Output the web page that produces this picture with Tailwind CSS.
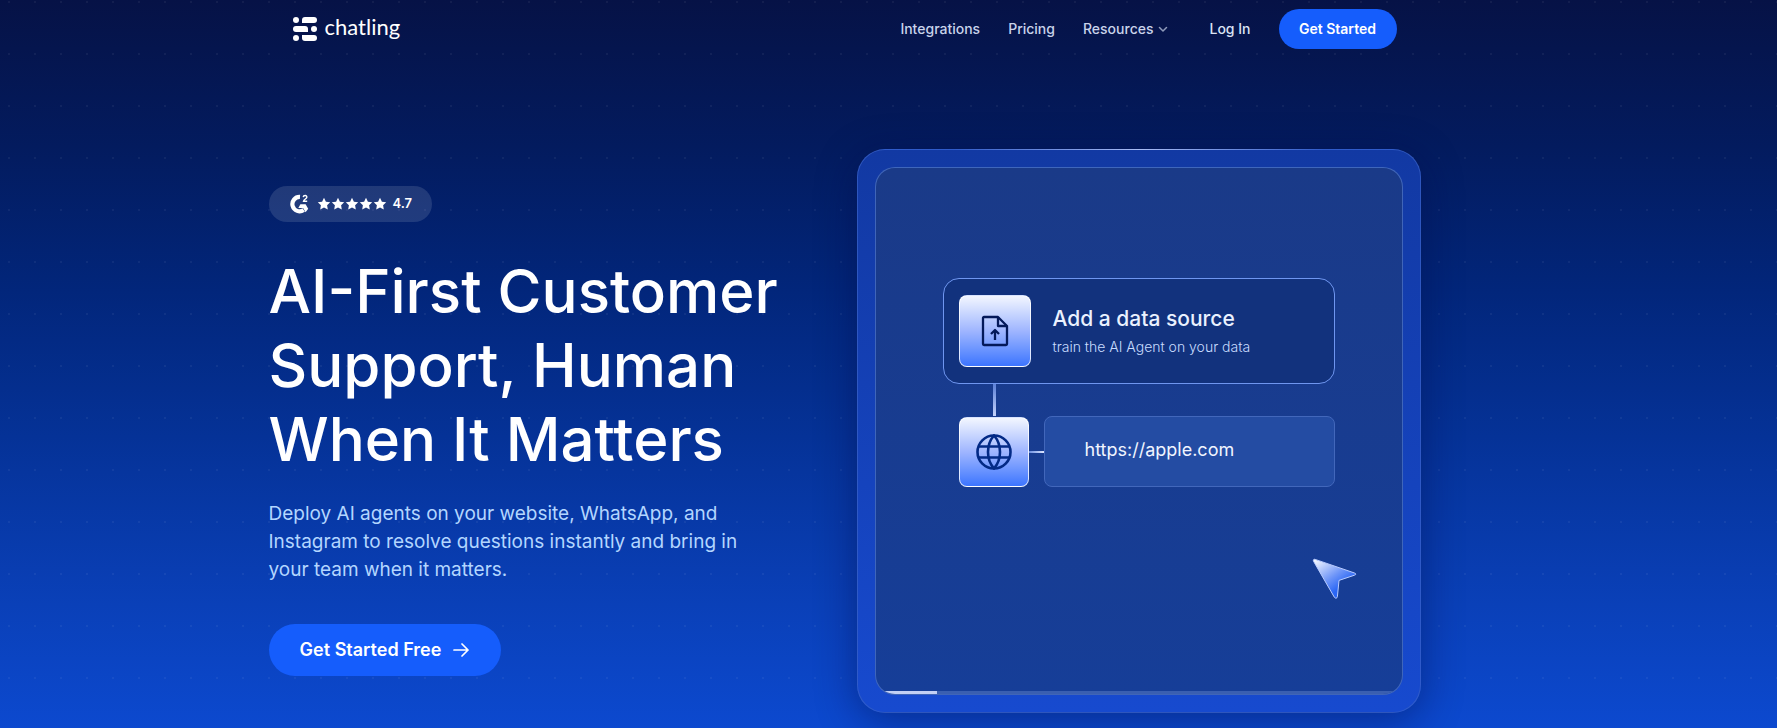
<!DOCTYPE html>
<html lang="en">
<head>
    <meta charset="UTF-8">
    <meta name="viewport" content="width=device-width, initial-scale=1.0">
    <title>Chatling - AI-First Customer Support</title>
    <script src="https://cdn.jsdelivr.net/npm/@tailwindcss/browser@4"></script>
</head>
<body class="min-h-screen overflow-x-hidden bg-[#0b48cc] bg-[linear-gradient(180deg,#061246_0%,#031b5e_20%,#02267b_40%,#053297_60%,#0a40b8_83%,#0c49cf_100%)] font-['Inter',sans-serif] text-white">
    <div class="min-h-screen bg-[radial-gradient(circle_at_center,rgb(255_255_255/0.05)_1px,transparent_1px)] bg-size-[26px_52px] bg-position-[-4px_-24px] lg:pr-22">

        <!-- Header -->
        <header class="mx-auto flex h-[58px] max-w-6xl items-center justify-between px-6">
            <a href="#" class="flex items-center gap-2">
                <svg class="size-6" viewBox="0 0 24 24" fill="currentColor" aria-hidden="true">
                    <circle cx="3" cy="3" r="3" />
                    <path d="M12 0h9a3 3 0 0 1 0 6H9V3a3 3 0 0 1 3-3z" />
                    <path d="M3 9h9a3 3 0 0 1 3 3v3H3a3 3 0 0 1 0-6z" />
                    <circle cx="21" cy="12" r="3" />
                    <circle cx="3" cy="21" r="3" />
                    <path d="M12 18h9a3 3 0 0 1 0 6h-9a3 3 0 0 1-3-3v-3z" />
                </svg>
                <span class="mb-1 font-['Lato',sans-serif] text-[22px] leading-6">chatling</span>
            </a>

            <nav class="flex items-center text-sm font-medium text-[#c9d3ea]">
                <a href="#" class="hover:text-white">Integrations</a>
                <a href="#" class="ml-7 hover:text-white">Pricing</a>
                <button type="button" class="ml-7 flex items-center gap-1 hover:text-white">
                    Resources
                    <svg class="size-3 opacity-70" viewBox="0 0 12 12" fill="none" stroke="currentColor" stroke-width="1.5" stroke-linecap="round" stroke-linejoin="round" aria-hidden="true">
                        <path d="m2.500 4.500 3.500 3.500 3.500-3.500" />
                    </svg>
                </button>
                <a href="#" class="ml-10 text-[#dbe3f5] hover:text-white">Log In</a>
                <a href="#" class="ml-7 flex h-10 w-[118px] items-center justify-center rounded-full bg-[#155dfc] font-semibold text-white hover:bg-blue-500">Get Started</a>
            </nav>
        </header>

        <!-- Hero -->
        <main class="mx-auto grid max-w-6xl items-start pt-[91px] pb-[15px] lg:grid-cols-[1fr_564px]">
            <section class="pt-[37px]">
                <div class="inline-flex h-9 items-center rounded-full bg-white/12 px-5">
                    <svg class="size-5" viewBox="0 0 20 20" aria-label="G2">
                        <path d="M11 2.900A7.200 7.200 0 1 0 14.700 16" fill="none" stroke="currentColor" stroke-width="4.200" />
                        <path d="M11.400 10.300h5.200l2.600 4.500-2.600 3.400-2.500-4.300H9.300z" fill="currentColor" />
                        <path d="M14.200 3.200c.3-2.300 3.900-2.100 3.600.1-.2 1.500-2.900 2-3.300 4h3.700" fill="none" stroke="currentColor" stroke-width="1.400" />
                    </svg>
                    <svg class="ml-2 h-3.5 w-[70px]" viewBox="0 0 70 14" fill="currentColor" aria-label="5 stars">
                        <defs>
                            <path id="star" d="M7 .8l1.900 3.900 4.300.6-3.100 3 .7 4.300L7 10.600l-3.800 2 .7-4.300-3.100-3 4.300-.6z" />
                        </defs>
                        <use href="#star" />
                        <use href="#star" x="14" />
                        <use href="#star" x="28" />
                        <use href="#star" x="42" />
                        <use href="#star" x="56" />
                    </svg>
                    <span class="ml-1.5 text-[13px] font-semibold">4.7</span>
                </div>

                <h1 class="mt-8 text-[60px] leading-[74px] font-medium">
                    AI-First Customer<br>
                    Support, Human<br>
                    When It Matters
                </h1>

                <p class="mt-6 max-w-[500px] text-[19px] leading-7 text-[#b3d6ff]">
                    Deploy AI agents on your website, WhatsApp, and Instagram to resolve questions instantly and bring in your team when it matters.
                </p>

                <a href="#" class="mt-10 inline-flex h-[52px] w-[232px] items-center justify-center gap-3 rounded-full bg-[#155dfc] text-lg font-semibold hover:bg-blue-500">
                    Get Started Free
                    <svg class="size-4" viewBox="0 0 16 16" fill="none" stroke="currentColor" stroke-width="1.700" stroke-linecap="round" stroke-linejoin="round" aria-hidden="true">
                        <path d="M1 8h14M9 2l6 6-6 6" />
                    </svg>
                </a>
            </section>

            <!-- Product preview -->
            <section class="relative aspect-square rounded-[28px] border border-[#3a62c8]/70 bg-linear-to-b from-[#1239a3] to-[#174acf] p-[17px] shadow-[0_8px_40px_rgb(0_10_70/0.45)]">
                <div class="absolute inset-x-24 -top-px h-px bg-linear-to-r from-transparent via-[#a9bdf5] to-transparent"></div>

                <div class="relative h-full overflow-hidden rounded-[20px] border border-[#4a70c4]/80 bg-linear-to-b from-[#1a3a88] to-[#163e98] px-[67px] pt-[110px]">
                    <div class="flex h-[106px] items-center rounded-2xl border border-[#6f96f0] bg-[#12327d] px-[15px]">
                        <div class="flex size-[72px] shrink-0 items-center justify-center rounded-lg border border-white/80 bg-linear-to-b from-[#f3f6ff] via-[#9fb5ff] to-[#3c74ff] text-[#04195a]">
                            <svg class="size-8" viewBox="0 0 32 32" fill="none" stroke="currentColor" stroke-width="2.300" stroke-linejoin="round" aria-hidden="true">
                                <path d="M4 3a1 1 0 0 1 1-1h14l9 9v18a1 1 0 0 1-1 1H5a1 1 0 0 1-1-1z" />
                                <path d="M19 2v9h9M16 25v-9M12 19l4-4 4 4" />
                            </svg>
                        </div>
                        <div class="ml-[22px] pt-1">
                            <h2 class="text-[21px] leading-7 font-medium text-[#eaf1ff]">Add a data source</h2>
                            <p class="text-sm leading-7 font-light text-[#c9dcff]">train the AI Agent on your data</p>
                        </div>
                    </div>

                    <div class="ml-[50px] h-8 w-[3px] bg-linear-to-b from-[#5c80d6] to-[#c5d2fa]"></div>

                    <div class="flex items-center pl-4">
                        <div class="flex size-[70px] shrink-0 items-center justify-center rounded-lg border border-white/80 bg-linear-to-b from-[#f3f6ff] via-[#9fb5ff] to-[#3c74ff] text-[#032a86]">
                            <svg class="size-9" viewBox="0 0 36 36" fill="none" stroke="currentColor" stroke-width="2.600" aria-hidden="true">
                                <circle cx="18" cy="18" r="16.500" />
                                <path d="M2.500 12.500h31M2.500 23.500h31" />
                                <path d="M18 1.500c-8 9-8 24 0 33c8-9 8-24 0-33z" />
                            </svg>
                        </div>
                        <div class="h-0.5 w-[15px] shrink-0 bg-linear-to-r from-[#6c8ee0] to-[#dfe7ff]"></div>
                        <div class="flex h-[71px] flex-1 items-center rounded-lg border border-[#4267bb] bg-[#244ca3] pb-1 pl-10">
                            <a href="#" class="text-lg text-[#f1f5ff]">https://apple.com</a>
                        </div>
                    </div>

                    <!-- Pointer -->
                    <svg class="absolute right-11 bottom-[94px] h-[42px] w-[46px]" viewBox="0 0 46 42" aria-hidden="true">
                        <defs>
                            <linearGradient id="pointer" x1="0" y1="0" x2="0.700" y2="0.900">
                                <stop offset="0" stop-color="#ffffff" />
                                <stop offset="0.550" stop-color="#6f96f8" />
                                <stop offset="0.850" stop-color="#2a66f5" />
                            </linearGradient>
                        </defs>
                        <path d="M1.500 3.200C.9 1.900 1.900.9 3.200 1.400L42.500 15c1.700.6 1.700 1.700 0 2.200L27 22.400l-1.600 16.300c-.3 1.700-2 2-3 .6z" fill="url(#pointer)" stroke="#b9ccff" stroke-width="1" />
                    </svg>

                    <!-- Playback progress -->
                    <div class="absolute inset-x-0 bottom-0 h-[3px] bg-[#4468b8]/80">
                        <div class="h-full bg-[#c3d0f5]" style="width: 11.700%"></div>
                    </div>
                </div>
            </section>
        </main>
    </div>
</body>
</html>
